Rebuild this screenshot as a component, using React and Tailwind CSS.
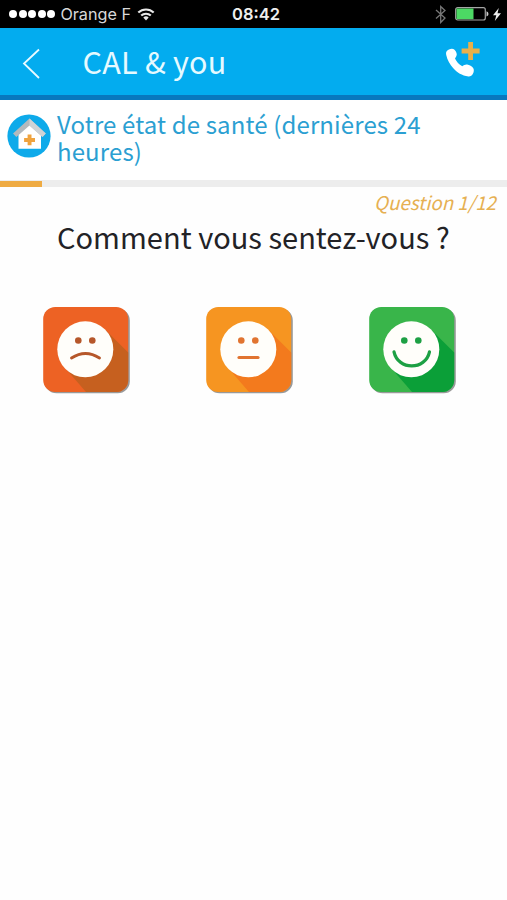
import React from 'react';

const SANS = "font-['Noto_Sans_CJK_JP','Noto_Sans',sans-serif]";

function StatusBar() {
  return (
    <div className="flex h-7 items-center bg-black pl-[9px] pr-[6px] font-['Inter',sans-serif] text-white">
      <div className="flex w-[223px] items-center">
        <div className="flex gap-[1.6px]">
          {[0, 1, 2, 3, 4].map((i) => (
            <span key={i} className="size-[8px] rounded-full bg-white" />
          ))}
        </div>
        <span className="ml-[5px] w-[71px] whitespace-nowrap text-[16.2px] leading-7 text-[#d8d8d8]">Orange F</span>
        <svg className="ml-[5.5px]" width="18" height="13" viewBox="0 0 18 13" fill="none" stroke="#e8e8e8" strokeWidth="2.1">
          <path d="M1.3 4.6a11 11 0 0 1 15.4 0" />
          <path d="M4.2 7.6a7 7 0 0 1 9.6 0" />
          <path d="M6.3 9.600a4 4 0 0 1 5.400 0L9 12.400z" fill="#e8e8e8" stroke="none" />
        </svg>
      </div>
      <span className="w-[60px] whitespace-nowrap text-[16.5px] font-semibold leading-7 text-[#eeeeee]">08:42</span>
      <svg className="ml-auto" width="12" height="19" viewBox="0 0 12 19" fill="none" stroke="#777" strokeWidth="1.3">
        <path d="M1 5l9 8-4.300 4.500V1.500L10 5.500 1 13.500" />
      </svg>
      <svg className="ml-[8px]" width="34" height="14" viewBox="0 0 34 14">
        <rect x=".7" y=".7" width="29.600" height="12.300" rx="2" fill="none" stroke="#a5a5a5" strokeWidth="1.200" />
        <rect x="1.500" y="1.500" width="17" height="10.700" fill="#4cd964" />
        <path d="M31.500 4.300q2 .8 2 2.600t-2 2.600z" fill="#ccc" />
      </svg>
      <svg className="ml-[4px]" width="8" height="13" viewBox="0 0 8 13" fill="#eee">
        <path d="M5.800 0L0 7.300h3.300L1.800 13 8 5.300H4.500z" />
      </svg>
    </div>
  );
}

function Header() {
  return (
    <header className="flex h-[72px] border-b-[5px] border-[#0878be] bg-[#03acef] text-white">
      <svg className="ml-[22px] mt-[20px]" width="19" height="32" viewBox="0 0 19 32" fill="none" stroke="#e9faff" strokeWidth="1.800">
        <path d="M17 1.500L2 15.500 17 30" />
      </svg>
      <h1 className={`${SANS} ml-[41.5px] mt-[13px] whitespace-nowrap text-[30.5px] leading-[40px] tracking-[0.25px] text-[#e6faff]`}>CAL &amp; you</h1>
      <svg className="ml-auto mr-[26px] mt-[13px]" width="36" height="37" viewBox="0 0 36 37">
        <path d="M1.500 10.500C3.500 8 7.500 6.800 9.500 8.800c1.800 1.800 3 4.500 1.800 6.500l-1.300 2.200c1.500 3.200 4 6 7.300 7.700 1.800-1.300 3.500-2.200 5.700-1.500 2 .6 4.300 1.800 5.300 3.500.9 1.700.6 3.800-.4 5.500-1 1.800-2.500 3-4.500 2.800C17 34.700 12 31.500 8.300 27.300 4.800 23.300 2.300 19 1.300 14.300c-.3-1.500-.4-2.800.2-3.800z" fill="#fff" />
        <path d="M23.200 1h4.800v6.600h6.600v4.800H28V19h-4.800v-6.600h-6.600V7.600h6.600z" fill="#e9b04b" />
      </svg>
    </header>
  );
}

function HouseIcon() {
  return (
    <svg className="shrink-0" width="44" height="44" viewBox="0 0 44 44">
      <circle cx="22" cy="22" r="21.600" fill="#0eaaea" />
      <path d="M11.500 20L22.500 9.500 34 20v14.800H11.500z" fill="#fff" />
      <path d="M22.500 4.500L6 19.500l3.300 3.500L22.500 11.500 35.500 23l3.300-3.500z" fill="#b3b9bd" />
      <path d="M22.500 4.500l16.300 15-3.300 3.500L22.500 11.500z" fill="#cfd3d6" />
      <path d="M20.600 20.600h3.900v3.300H28V28h-3.500v3.300h-3.900V28h-3.500v-4.100h3.500z" fill="#efa33e" />
    </svg>
  );
}

function Face({ bg, shade, ink, mouth, mouthWidth }) {
  return (
    <button className="size-[88px]" type="button">
      <svg width="88" height="88" viewBox="0 0 88 88">
        <rect x="1.500" y="1.500" width="85.300" height="84.800" rx="12" fill="#999" />
        <rect x=".2" y="0" width="85" height="85" rx="12" fill={bg} />
        <path d="M62.500 23L85.200 45.500V73a12 12 0 0 1-12 12H43L23 62z" fill={shade} />
        <circle cx="42.300" cy="42.300" r="28" fill="#fffefa" />
        <circle cx="35.300" cy="33.500" r="3.300" fill={ink} />
        <circle cx="49.300" cy="33.500" r="3.300" fill={ink} />
        <path d={mouth} fill="none" stroke={ink} strokeWidth={mouthWidth} strokeLinecap="round" />
      </svg>
    </button>
  );
}

export default function App() {
  return (
    <div className="flex h-[900px] w-[507px] flex-col overflow-hidden bg-[#fefefe]">
      <StatusBar />
      <Header />
      <section className="flex h-[80px] bg-white pl-[7px] pt-[14px]">
        <HouseIcon />
        <h2 className={`${SANS} -mt-[4px] ml-[6px] whitespace-nowrap text-[24px] leading-[27px] tracking-[0.13px] text-[#2b9fd2]`}>
          Votre état de santé (dernières 24
          <br />
          heures)
        </h2>
      </section>
      <div className="h-[7px] bg-[#ededed] pt-px">
        <div className="h-[6px] w-[41.5px] bg-[#efab43]" />
      </div>
      <p className={`${SANS} mt-[3px] h-6 pr-[11px] text-right text-[18.8px] italic leading-6 text-[#e6b052]`}>Question 1/12</p>
      <p className={`${SANS} mt-[2px] h-10 whitespace-nowrap pl-[57px] text-[29px] leading-10 tracking-[0.02px] text-[#222226]`}>Comment vous sentez-vous ?</p>
      <div className="mt-[51px] flex gap-[75px] pl-[43px]">
        <Face bg="#ed6224" shade="#c6601f" ink="#b6572a" mouth="M28.500 51Q42.500 42 56.500 51" mouthWidth="2.900" />
        <Face bg="#f69521" shade="#f37a1d" ink="#e17430" mouth="M33 50.500H52" mouthWidth="3.200" />
        <Face bg="#39b54a" shade="#0b9f38" ink="#1da044" mouth="M25 44.800C29 63.600 56.500 63.600 60.500 44.800" mouthWidth="3.200" />
      </div>
    </div>
  );
}
